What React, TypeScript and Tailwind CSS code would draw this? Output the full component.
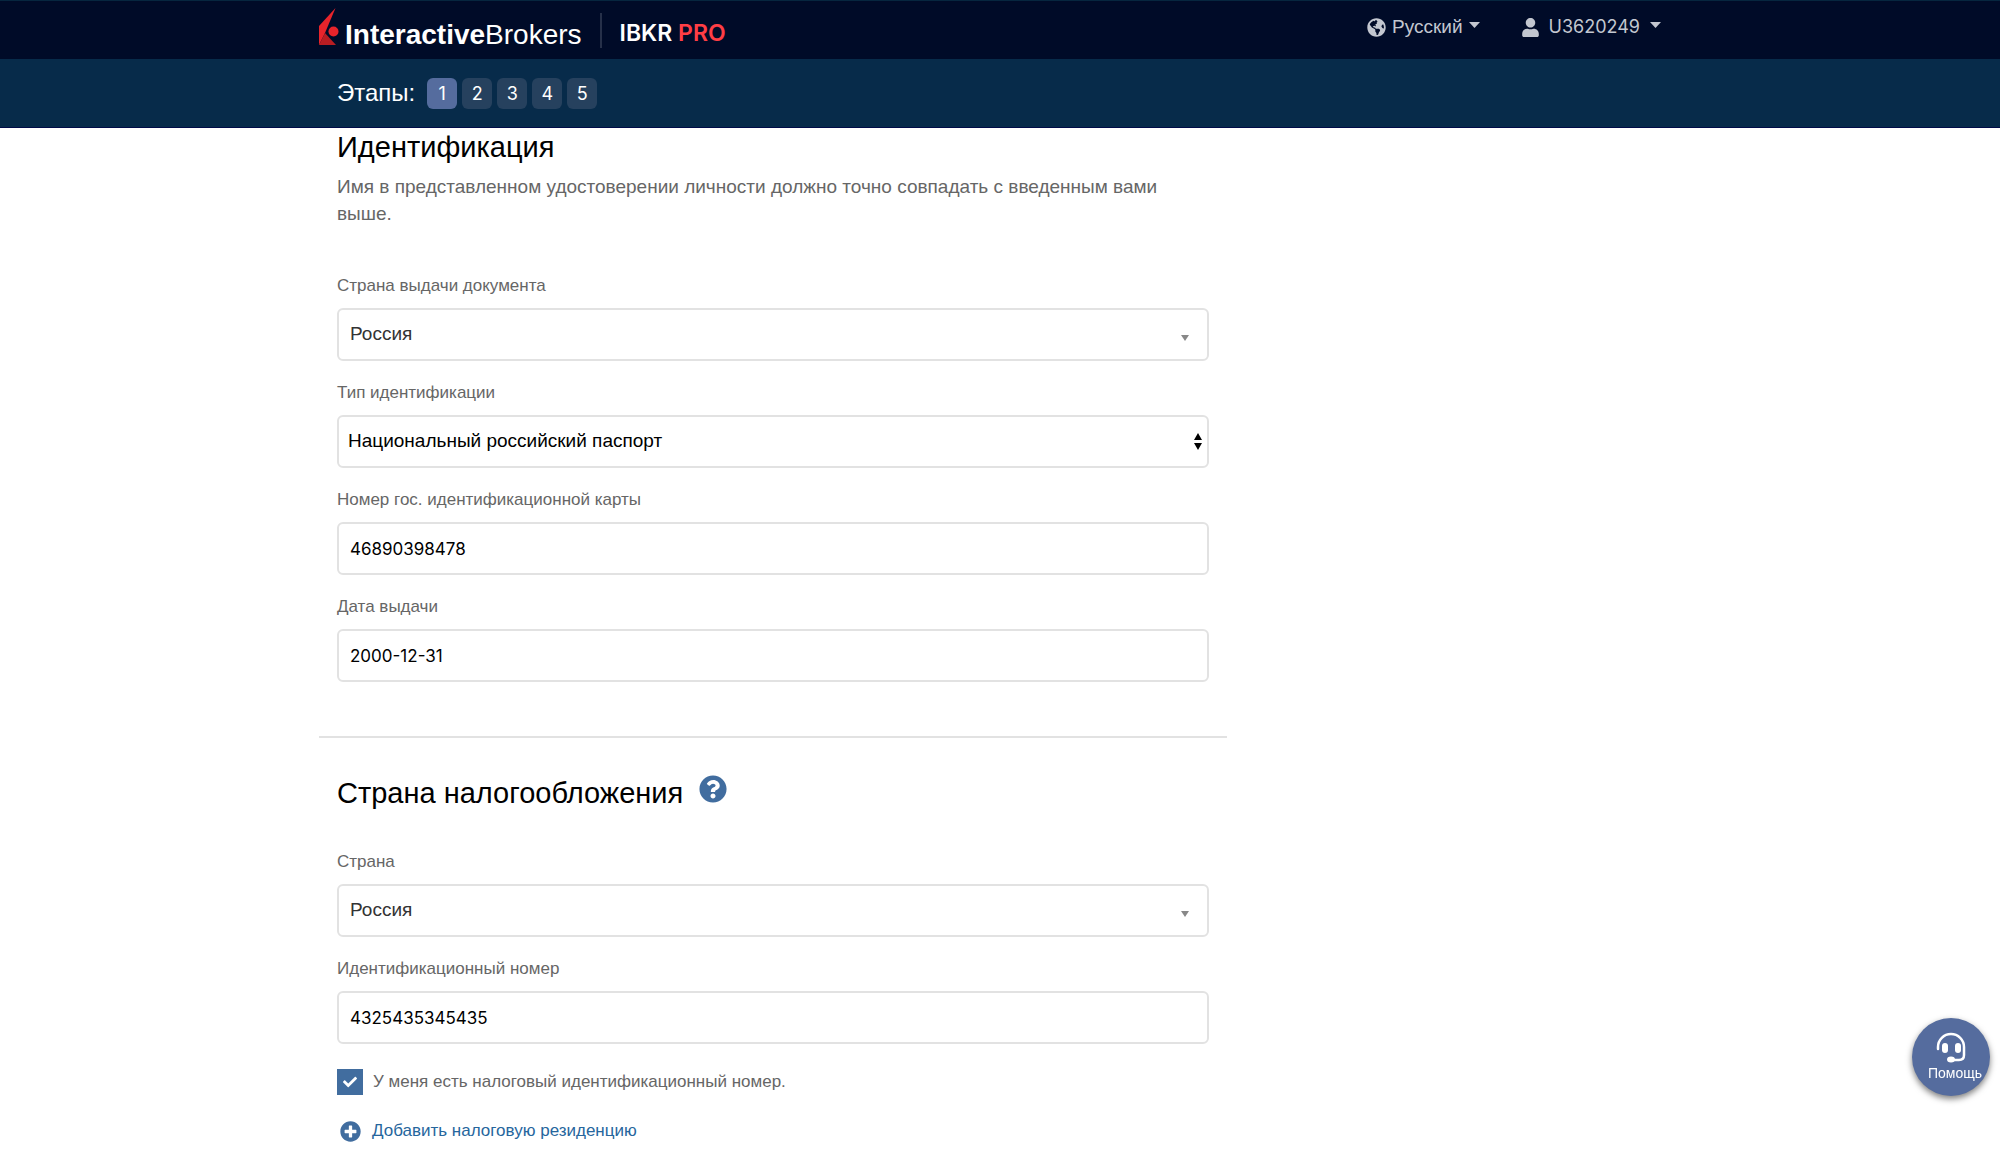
import { useState, type ReactNode } from 'react';
import { FaCheck, FaGlobeAmericas, FaPlusCircle, FaQuestionCircle, FaUser } from 'react-icons/fa';

const steps = [1, 2, 3, 4, 5];

const controlClass =
  'block h-[53px] w-full appearance-none rounded-md border-2 border-[#e2e2e2] bg-white outline-none focus:border-[#416d9f]';

function Caret() {
  return (
    <svg className="h-[6px] w-[11px]" viewBox="0 0 11 6" fill="currentColor" aria-hidden="true">
      <path d="M0 0h11L5.5 6z" />
    </svg>
  );
}

function Logo() {
  return (
    <a href="#" className="flex items-start gap-[6px] text-white">
      <svg className="h-[37px] w-5" viewBox="0 0 20 37" aria-hidden="true">
        <path d="M16.5 0L0 18v19l6-12z" fill="#e8242b" />
        <path d="M0 37L6 25l11 12z" fill="#b81d22" />
        <circle cx="14.500" cy="23.500" r="5" fill="#e8242b" />
      </svg>
      <span className="mt-3 text-[28px] leading-[30px]">
        <b>Interactive</b>Brokers
      </span>
    </a>
  );
}

function Field({ id, label, children }: { id: string; label: string; children: ReactNode }) {
  return (
    <div className="mb-[18px]">
      <label htmlFor={id} className="mb-2 block text-[17px] leading-7 text-[#666]">
        {label}
      </label>
      {children}
    </div>
  );
}

function CountrySelect({ id }: { id: string }) {
  return (
    <div className="relative">
      <select id={id} className={`${controlClass} px-[11px] text-[19px] text-[#333]`}>
        <option>Россия</option>
      </select>
      <svg
        className="pointer-events-none absolute top-[27px] right-5 h-[6px] w-2 text-[#888]"
        viewBox="0 0 8 6"
        fill="currentColor"
        aria-hidden="true"
      >
        <path d="M0 0h8L4 6z" />
      </svg>
    </div>
  );
}

function TextInput({ id, value, onChange }: { id: string; value: string; onChange: (value: string) => void }) {
  return (
    <input
      id={id}
      type="text"
      value={value}
      onChange={(e) => onChange(e.target.value)}
      className={`${controlClass} px-[11px] font-[Inter,sans-serif] text-[17px] text-black`}
    />
  );
}

export default function App() {
  const [cardNumber, setCardNumber] = useState('46890398478');
  const [issueDate, setIssueDate] = useState('2000-12-31');
  const [taxNumber, setTaxNumber] = useState('4325435345435');
  const [hasTaxNumber, setHasTaxNumber] = useState(true);

  return (
    <div className="min-h-screen bg-white font-['Liberation_Sans',Arial,sans-serif]">
      <header>
        <nav className="border-t border-[#06263f] bg-[#000b28]">
          <div className="mx-auto flex h-[58px] max-w-[1362px] items-start justify-between">
            <div className="flex items-start pt-[7px]">
              <Logo />
              <div className="mt-[5px] ml-[18px] h-[35px] w-0.5 bg-[#263049]" />
              <span className="mt-[10px] ml-[18px] font-[Inter,sans-serif] text-[23px] leading-[30px] font-semibold text-white">
                IBKR <span className="text-[#ff3e45]">PRO</span>
              </span>
            </div>
            <div className="flex items-center gap-[42px] pt-3 pr-5 text-[#c3c7d0]">
              <button type="button" className="flex items-center text-[19px] leading-[28px]">
                <FaGlobeAmericas className="mr-[6px] size-[19px]" />
                Русский
                <span className="mb-1 ml-[6px]">
                  <Caret />
                </span>
              </button>
              <button type="button" className="flex items-center font-[Inter,sans-serif] text-[18px] leading-[28px]">
                <FaUser className="mr-[10px] h-[19px] w-[17px]" />
                U3620249
                <span className="mb-1 ml-[10px]">
                  <Caret />
                </span>
              </button>
            </div>
          </div>
        </nav>
        <div className="border-b border-[#000b48] bg-[#072b4a]">
          <div className="mx-auto flex h-[68px] max-w-[1362px] items-center gap-3 px-[18px]">
            <span className="text-[24px] leading-[32px] text-white">Этапы:</span>
            <ol className="flex gap-[5px]">
              {steps.map((step) => (
                <li key={step}>
                  <button
                    type="button"
                    className={`block h-[31px] w-[30px] rounded-md font-[Inter,sans-serif] text-[18px] text-white ${
                      step === 1 ? 'bg-[#556c9e]' : 'bg-[#26415e]'
                    }`}
                  >
                    {step}
                  </button>
                </li>
              ))}
            </ol>
          </div>
        </div>
      </header>

      <main className="mx-auto max-w-[1362px]">
        <div className="w-2/3">
          <section className="border-b-2 border-[#e2e2e2] px-[18px] pb-[36px]">
            <h1 className="text-[29px] leading-[38px] text-black">Идентификация</h1>
            <p className="mt-[7px] mb-[45px] text-[19px] leading-[27px] text-[#666]">
              Имя в представленном удостоверении личности должно точно совпадать с введенным вами выше.
            </p>
            <Field id="issue-country" label="Страна выдачи документа">
              <CountrySelect id="issue-country" />
            </Field>
            <Field id="id-type" label="Тип идентификации">
              <div className="relative">
                <select id="id-type" className={`${controlClass} px-[9px] text-[19px] text-black`}>
                  <option>Национальный российский паспорт</option>
                </select>
                <svg
                  className="pointer-events-none absolute top-[18px] right-[7px] h-[17px] w-2 text-black"
                  viewBox="0 0 8 17"
                  fill="currentColor"
                  aria-hidden="true"
                >
                  <path d="M0 7h8L4 0zM0 10h8L4 17z" />
                </svg>
              </div>
            </Field>
            <Field id="card-number" label="Номер гос. идентификационной карты">
              <TextInput id="card-number" value={cardNumber} onChange={setCardNumber} />
            </Field>
            <Field id="issue-date" label="Дата выдачи">
              <TextInput id="issue-date" value={issueDate} onChange={setIssueDate} />
            </Field>
          </section>

          <section className="px-[18px] pt-[35px]">
            <div className="mb-[35px] flex items-start gap-4">
              <h2 className="text-[29px] leading-[40px] text-black">Страна налогообложения</h2>
              <button type="button" aria-label="Справка" className="mt-[2px] text-[#416d9f]">
                <FaQuestionCircle className="size-7" />
              </button>
            </div>
            <Field id="tax-country" label="Страна">
              <CountrySelect id="tax-country" />
            </Field>
            <Field id="tax-number" label="Идентификационный номер">
              <TextInput id="tax-number" value={taxNumber} onChange={setTaxNumber} />
            </Field>
            <label className="mt-[25px] flex items-center gap-[10px] text-[17px] leading-[26px] text-[#666]">
              <span className="relative">
                <input
                  type="checkbox"
                  checked={hasTaxNumber}
                  onChange={(e) => setHasTaxNumber(e.target.checked)}
                  className="block size-[26px] appearance-none border border-[#416d9f] checked:bg-[#416d9f]"
                />
                <FaCheck className="pointer-events-none absolute top-[6px] left-[6px] size-[14px] text-white" />
              </span>
              У меня есть налоговый идентификационный номер.
            </label>
            <a href="#" className="mt-[23px] flex items-center gap-[11px] pl-[3px] text-[17px] leading-[26px] text-[#26669d]">
              <FaPlusCircle className="size-[21px] text-[#416d9f]" />
              Добавить налоговую резиденцию
            </a>
          </section>
        </div>
      </main>

      <button
        type="button"
        className="fixed right-[10px] bottom-[64px] flex size-[78px] flex-col items-center rounded-full bg-[#556c9e] pt-[14px] text-[14px] leading-[20px] text-white shadow-[0_3px_6px_rgba(0,0,0,0.5)]"
      >
        <svg className="h-[31px] w-[30px] shrink-0" viewBox="0 0 30 31" fill="none" aria-hidden="true">
          <path d="M2 17v-2a13 13 0 0 1 26 0v8q0 5-5 5h-8" stroke="currentColor" strokeWidth="2.5" strokeLinecap="round" />
          <rect x="6" y="11" width="6" height="10" rx="3" fill="currentColor" />
          <rect x="19" y="11" width="6" height="10" rx="3" fill="currentColor" />
          <ellipse cx="15" cy="27.5" rx="4" ry="3" fill="currentColor" />
        </svg>
        <span className="pl-2">Помощь</span>
      </button>
    </div>
  );
}
